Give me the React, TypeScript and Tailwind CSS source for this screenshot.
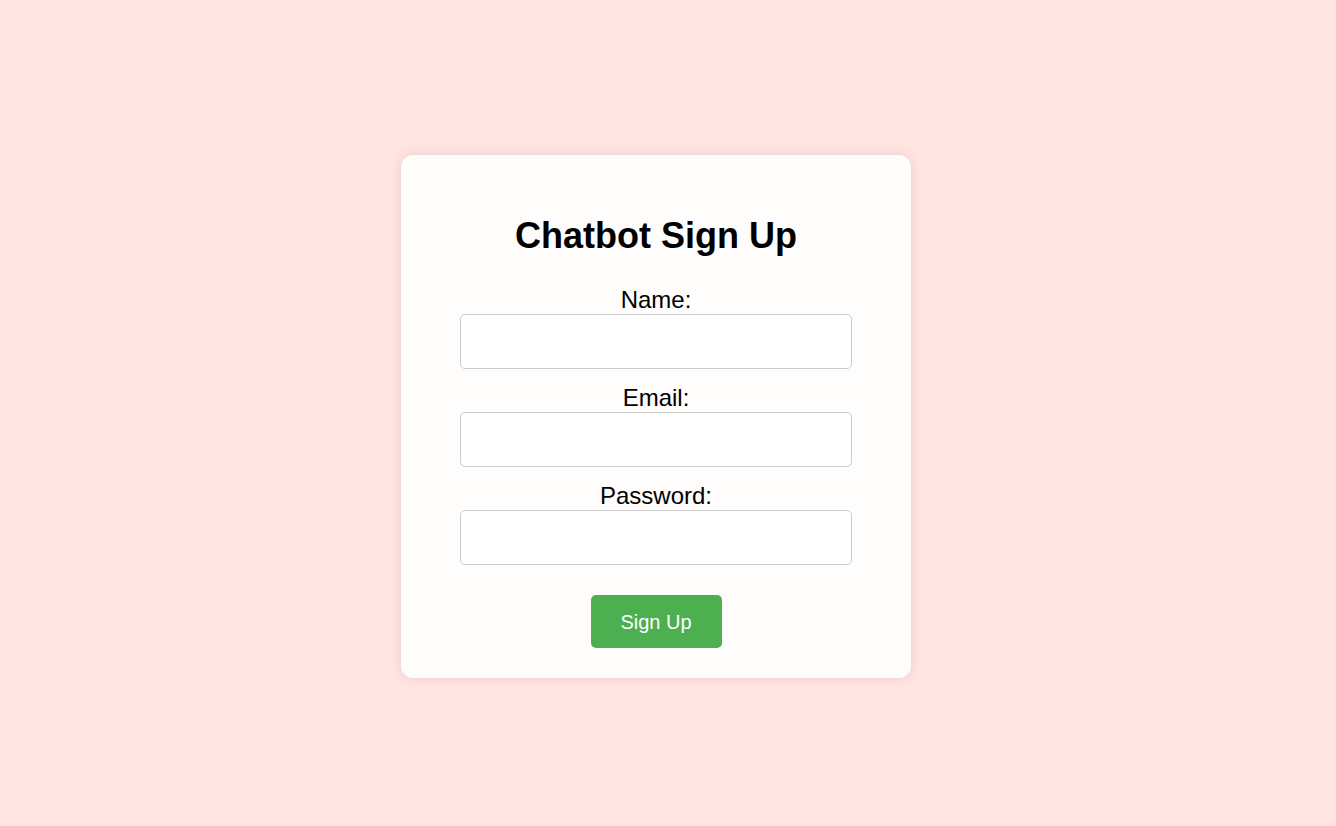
import React from "react";

export default function App() {
  const fields = [
    { label: "Name:", type: "text" },
    { label: "Email:", type: "email" },
    { label: "Password:", type: "password" },
  ];
  return (
    <div
      className="min-h-screen w-full bg-[#ffe4e1] flex items-center justify-center pt-[7px] pr-[24px]"
      style={{ fontFamily: '"Liberation Sans", Arial, sans-serif' }}
    >
      <div className="w-[510px] bg-[#fffcfc] rounded-[12px] shadow-[0_0_12px_rgba(0,0,0,0.1)] pt-[61px] pb-[30px] px-[59px] flex flex-col items-center">
        <h1 className="text-[36px] leading-[40px] font-bold text-black mb-[30px]">
          Chatbot Sign Up
        </h1>
        <form className="w-full flex flex-col items-center gap-[15px]" onSubmit={(e) => e.preventDefault()}>
          {fields.map((f) => (
            <div key={f.label} className="w-full flex flex-col">
              <label className="block text-center text-[24px] leading-[28px] text-black">
                {f.label}
              </label>
              <input
                type={f.type}
                className="w-full h-[55px] border border-[#cccccc] rounded-[5px] bg-white px-3 outline-none"
              />
            </div>
          ))}
          <button
            type="submit"
            className="mt-[15px] w-[131px] h-[53px] bg-[#4caf50] text-white text-[20px] rounded-[5px]"
          >
            Sign Up
          </button>
        </form>
      </div>
    </div>
  );
}
